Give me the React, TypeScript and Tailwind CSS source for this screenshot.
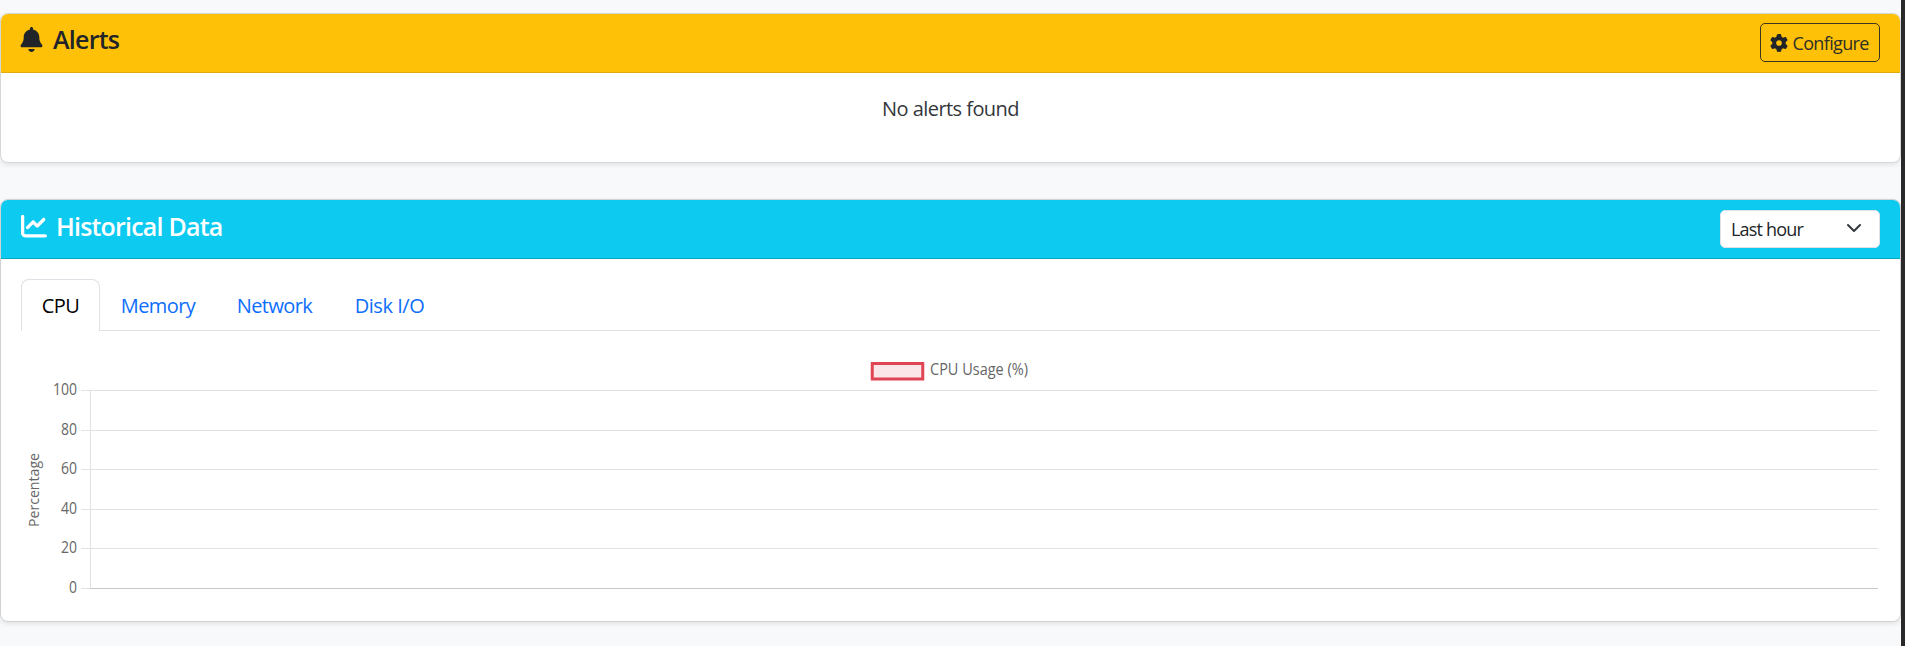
import { FaBell, FaChartLine, FaGear } from "react-icons/fa6";

const ticks = [
  { label: "100", y: 20.5 },
  { label: "80", y: 60.5 },
  { label: "60", y: 99.5 },
  { label: "40", y: 139.5 },
  { label: "20", y: 178.5 },
  { label: "0", y: 218.5 },
];

function CpuChart() {
  return (
    <svg className="mt-[39px] -ml-px block h-[230px] w-[1860px] overflow-visible" viewBox="20 0 1860 230" fill="#666">
      <rect x="872.25" y="-6.5" width="50.5" height="15.5" fill="#fbe7e9" stroke="#e04555" strokeWidth="3" />
      <text x="930" y="5" fontSize="15.5" textLength="98" lengthAdjust="spacingAndGlyphs">CPU Usage (%)</text>
      {ticks.map((t) => (
        <g key={t.label}>
          <path d={`M81 ${t.y}H1878`} stroke="#e2e2e2" />
          <text x="77" y={t.y + 4} fontSize="15.5" textAnchor="end" textLength={t.label.length * 8} lengthAdjust="spacingAndGlyphs">
            {t.label}
          </text>
        </g>
      ))}
      <path d="M90.5 20V218" stroke="#e2e2e2" />
      <path d="M90 218.5H1878" stroke="#c8c8c8" />
      <text transform="translate(39 157) rotate(-90)" fontSize="15" textLength="74" lengthAdjust="spacingAndGlyphs">
        Percentage
      </text>
    </svg>
  );
}

export default function App() {
  return (
    <div className="flex h-[646px] w-[1905px] overflow-hidden bg-[#f8f9fa] font-['Open_Sans','Noto_Sans',sans-serif] text-[#212529]">
      <main className="flex w-[1901px] flex-col pt-[13px]">
        <section className="h-[150px] rounded-lg border border-[#d5d7d9] bg-white shadow-[0_2px_5px_rgba(0,0,0,0.09)]">
          <header className="flex h-[59px] items-start justify-between rounded-t-[7px] border-b border-[#e0ac12] bg-[#ffc107] pr-5 pl-[18px]">
            <h2 className="mt-[10px] flex h-8 items-center text-[25px] font-semibold tracking-[-0.75px]">
              <FaBell className="-mt-0.5 mr-[9px] size-[25px] shrink-0" />
              Alerts
            </h2>
            <button className="mt-[9px] flex h-[39px] w-[120px] items-center rounded-[5px] border border-[#3a3520] pl-[9px] text-[18px] tracking-[-0.65px] text-[#2e2f26]">
              <FaGear className="mr-[4.500px] size-[18px] shrink-0 text-[#212529]" />
              <span className="pt-px">Configure</span>
            </button>
          </header>
          <p className="mt-[21px] text-center text-[20px] leading-[30px] tracking-[-0.55px] text-[#33373b]">No alerts found</p>
        </section>

        <section className="mt-9 h-[423px] rounded-lg border border-[#d0d2d4] bg-white shadow-[0_2px_5px_rgba(0,0,0,0.09)]">
          <header className="flex h-[59px] items-start justify-between rounded-t-[7px] border-b border-[#0ba6c4] bg-[#0dcaf0] pr-5 pl-[19.500px]">
            <h2 className="mt-[10px] flex h-8 items-center text-[25px] font-semibold tracking-[-0.8px] text-white">
              <FaChartLine className="mr-[9.500px] size-[26px] shrink-0" />
              <span className="pt-px">Historical Data</span>
            </h2>
            <button className="mt-[10px] flex h-[38px] w-[160px] items-center justify-between rounded-[5px] border border-[#dee2e6] bg-white pr-[17px] pl-[10px] text-[18px] tracking-[-0.8px]">
              Last hour
              <svg className="-mt-0.5 size-[16px]" viewBox="0 0 16 16" fill="none" stroke="#343a40" strokeWidth="2" strokeLinecap="round" strokeLinejoin="round">
                <path d="m2 5 6 6 6-6" />
              </svg>
            </button>
          </header>
          <div className="px-5 pt-5">
            <nav className="flex h-[52px] items-stretch border-b border-[#dee2e6] text-[20px] tracking-[-0.6px] text-[#0d6efd]">
              <a className="-mb-px flex w-[79px] items-center justify-center rounded-t-lg border border-b-0 border-[#dee2e6] bg-white text-black">CPU</a>
              <a className="flex w-[116px] items-center justify-center pt-0.5">Memory</a>
              <a className="flex w-[117px] items-center justify-center pt-0.5">Network</a>
              <a className="flex w-[113px] items-center justify-center pt-0.5 tracking-[-0.45px]">Disk I/O</a>
            </nav>
            <CpuChart />
          </div>
        </section>
      </main>
      <aside className="w-1 bg-[#292929]" />
    </div>
  );
}
